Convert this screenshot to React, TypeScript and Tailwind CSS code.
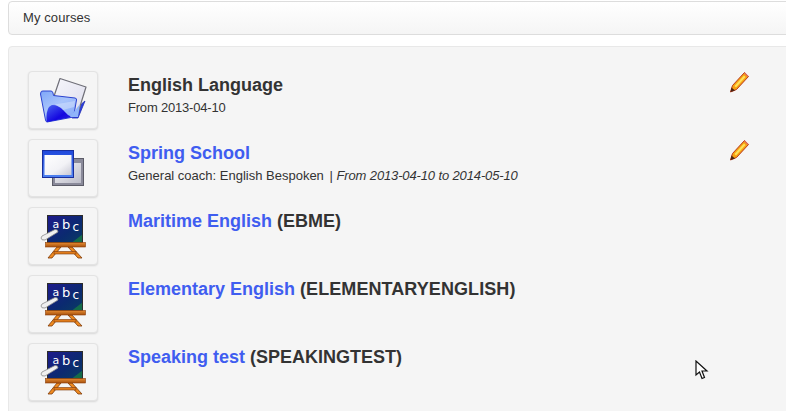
import React from "react";

const FolderIcon = () => (
  <svg width="48" height="48" viewBox="0 0 48 48">
    <defs>
      <linearGradient id="fold" x1="0" y1="0" x2="0.7" y2="1">
        <stop offset="0" stopColor="#7ea6f8" />
        <stop offset="0.5" stopColor="#a8c4fb" />
        <stop offset="1" stopColor="#86aaf8" />
      </linearGradient>
      <linearGradient id="foldDark" x1="0" y1="0" x2="1" y2="1">
        <stop offset="0" stopColor="#4a64f0" />
        <stop offset="0.6" stopColor="#1408e0" />
        <stop offset="1" stopColor="#2a28dc" />
      </linearGradient>
      <linearGradient id="sheet" x1="0" y1="0" x2="1" y2="1">
        <stop offset="0" stopColor="#f8f8fc" />
        <stop offset="1" stopColor="#dcdcec" />
      </linearGradient>
    </defs>
    <path d="M46 25 L39 42 L33 42 L40 30 Z" fill="#2b3ee0" stroke="#1f2cb0" strokeWidth="0.8" />
    <path d="M21 2.5 L47 11 L38 40 L11 32 Z" fill="url(#sheet)" stroke="#6f6f78" strokeWidth="1.2" strokeLinejoin="round" />
    <path d="M2 16 Q2 15 4 15 L12 15 Q13.5 15 14 17 L14.5 19.5 L36 22 Q38 22.5 37.5 24 L34.5 41 L8 46 Q7 46 6.5 44 L1.5 18 Z" fill="url(#fold)" stroke="#2b42d0" strokeWidth="1" strokeLinejoin="round" />
    <path d="M7.5 45.5 Q7 35 10 31 Q13 28 17 29 Q22 31 25 35 Q28 39 33 41 L8 46 Z" fill="url(#foldDark)" />
    <path d="M13 29 L36 25 L35 31 L24 34 Q19 29 13 29 Z" fill="#d2e0fd" opacity="0.55" />
    <path d="M31 41 L41 28 L39 41 Z" fill="#8fb4fa" />
  </svg>
);

const WindowsIcon = () => (
  <svg width="48" height="48" viewBox="0 0 48 48">
    <defs>
      <linearGradient id="winA" x1="0" y1="0" x2="1" y2="1">
        <stop offset="0" stopColor="#ffffff" />
        <stop offset="0.6" stopColor="#f2f2f6" />
        <stop offset="1" stopColor="#c8c8d4" />
      </linearGradient>
      <linearGradient id="winB" x1="0" y1="0" x2="1" y2="1">
        <stop offset="0" stopColor="#f4f4f6" />
        <stop offset="1" stopColor="#bcbcc8" />
      </linearGradient>
      <linearGradient id="barA" x1="0" y1="0" x2="0" y2="1">
        <stop offset="0" stopColor="#1f48dc" />
        <stop offset="1" stopColor="#4f82f0" />
      </linearGradient>
    </defs>
    <rect x="13.5" y="14.5" width="31" height="27" fill="#8a8a9a" stroke="#5c5c68" strokeWidth="1" />
    <rect x="16" y="19" width="26" height="20" fill="url(#winB)" />
    <rect x="3.5" y="6.5" width="31" height="27" fill="url(#barA)" stroke="#182e9e" strokeWidth="1" />
    <rect x="5.5" y="11" width="27" height="20" fill="url(#winA)" />
  </svg>
);

const BoardIcon = () => (
  <svg width="60" height="52" viewBox="0 0 60 52">
    <defs>
      <linearGradient id="board" x1="0" y1="0" x2="1" y2="1">
        <stop offset="0" stopColor="#1e1a8c" />
        <stop offset="0.6" stopColor="#0b2a70" />
        <stop offset="0.84" stopColor="#0a3568" />
        <stop offset="0.86" stopColor="#146b4a" />
        <stop offset="1" stopColor="#146b4a" />
      </linearGradient>
      <linearGradient id="wood" x1="0" y1="0" x2="0" y2="1">
        <stop offset="0" stopColor="#e58a30" />
        <stop offset="1" stopColor="#a8520f" />
      </linearGradient>
    </defs>
    <path d="M24 37 L15 48 L19 48 L28 37 Z M39 37 L49 48 L45 48 L35 37 Z" fill="#ee8a20" stroke="#7e3a0a" strokeWidth="0.8" />
    <rect x="21" y="41.5" width="22" height="2.5" fill="#e07c1c" stroke="#7e3a0a" strokeWidth="0.6" />
    <rect x="14.5" y="5.5" width="35" height="27" fill="url(#board)" stroke="#2c2c2c" strokeWidth="1" />
    <rect x="12.5" y="32.5" width="40" height="4.5" fill="url(#wood)" stroke="#8a3f0a" strokeWidth="0.6" />
    <text x="19.5" y="18" fill="#ffffff" fontSize="11" fontFamily="'DejaVu Sans', sans-serif">a</text>
    <text x="29" y="19" fill="#ffffff" fontSize="13" fontFamily="'DejaVu Sans', sans-serif">b</text>
    <text x="39.5" y="21" fill="#ffffff" fontSize="12" fontFamily="'DejaVu Sans', sans-serif">c</text>
    <path d="M9 26 L22 19.5 Q25 19 25 22 L12 30 Q8 30.5 8 28 Z" fill="#f0f0f0" stroke="#8a8a8a" strokeWidth="0.8" />
  </svg>
);

const Pencil = () => (
  <svg width="20" height="22" viewBox="0 0 20 22">
    <path d="M1.5 21 L3.5 14.5 L15.5 1.5 L19.5 5.5 L7.5 18.5 Z" fill="#f7a212" stroke="#b83a1c" strokeWidth="1" strokeLinejoin="round" />
    <path d="M5.5 15 L15 4.5 L16.5 6 L7 16.5 Z" fill="#fde25c" />
    <path d="M1.5 21 L2.5 16.5 L6 19.5 Z" fill="#4a2414" />
    <path d="M15.5 2 L19 5.5" stroke="#e0705a" strokeWidth="1.4" />
  </svg>
);

const Cursor = () => (
  <svg width="14" height="21" viewBox="0 0 14 21" className="absolute left-[695px] top-[360px]">
    <path d="M1 1 L1 15 L4.5 12 L7 18.5 L9.5 17.5 L7 11 L12 11 Z" fill="#ffffff" stroke="#111" strokeWidth="1.2" />
  </svg>
);

const Thumb = ({ children }: { children: React.ReactNode }) => (
  <div className="flex h-[58px] w-[70px] shrink-0 items-center justify-center rounded border border-[#e3e3e3] bg-[#f5f5f5] shadow-[0_1px_2px_rgba(0,0,0,0.12)]">
    {children}
  </div>
);

const CourseRow = ({
  icon,
  title,
  code,
  sub,
  link = true,
  edit = false,
}: {
  icon: React.ReactNode;
  title: React.ReactNode;
  code?: React.ReactNode;
  sub?: React.ReactNode;
  link?: boolean;
  edit?: boolean;
}) => (
  <div className="flex h-[58px] items-start">
    <Thumb>{icon}</Thumb>
    <div className="ml-[30px] flex-1 pt-px">
      <h3 className="text-[18px] leading-[26px] font-bold text-[#333333]">
        {link ? <span className="text-[#3f5df0]">{title}</span> : title}
        {code && <span> ({code})</span>}
      </h3>
      {sub && <p className="text-[13px] leading-[20px] text-[#333333]">{sub}</p>}
    </div>
    {edit && (
      <div className="pr-[36px]">
        <Pencil />
      </div>
    )}
  </div>
);

export default function App() {
  return (
    <div className="relative h-[411px] w-[786px] overflow-hidden bg-white font-['Liberation_Sans',Arial,sans-serif]">
      {/* breadcrumb */}
      <div className="mt-px -mr-6 ml-2 flex h-[34px] items-center rounded border border-[#dddddd] bg-gradient-to-b from-white to-[#f5f5f5] pl-[14px] text-[13px] tracking-[0.1px] text-[#333333]">
        My courses
      </div>

      {/* course list */}
      <div className="mt-[11px] -mr-6 ml-2 flex flex-col gap-[10px] rounded border border-[#e8e8e8] bg-[#f5f5f5] pt-6 pl-[19px] pb-10 pr-6">
        <CourseRow
          icon={<FolderIcon />}
          title="English Language"
          link={false}
          edit
          sub={<span className="tracking-[-0.2px]">From 2013-04-10</span>}
        />
        <CourseRow
          icon={<WindowsIcon />}
          title="Spring School"
          edit
          sub={
            <>
              General coach: English Bespoken <span className="ml-[2px]">|</span>{" "}
              <em className="tracking-[-0.13px]">From 2013-04-10 to 2014-05-10</em>
            </>
          }
        />
        <CourseRow icon={<BoardIcon />} title="Maritime English" code="EBME" />
        <CourseRow
          icon={<BoardIcon />}
          title="Elementary English"
          code={<span className="tracking-[0.08px]">ELEMENTARYENGLISH</span>}
        />
        <CourseRow icon={<BoardIcon />} title="Speaking test" code="SPEAKINGTEST" />
      </div>
      <Cursor />
    </div>
  );
}
